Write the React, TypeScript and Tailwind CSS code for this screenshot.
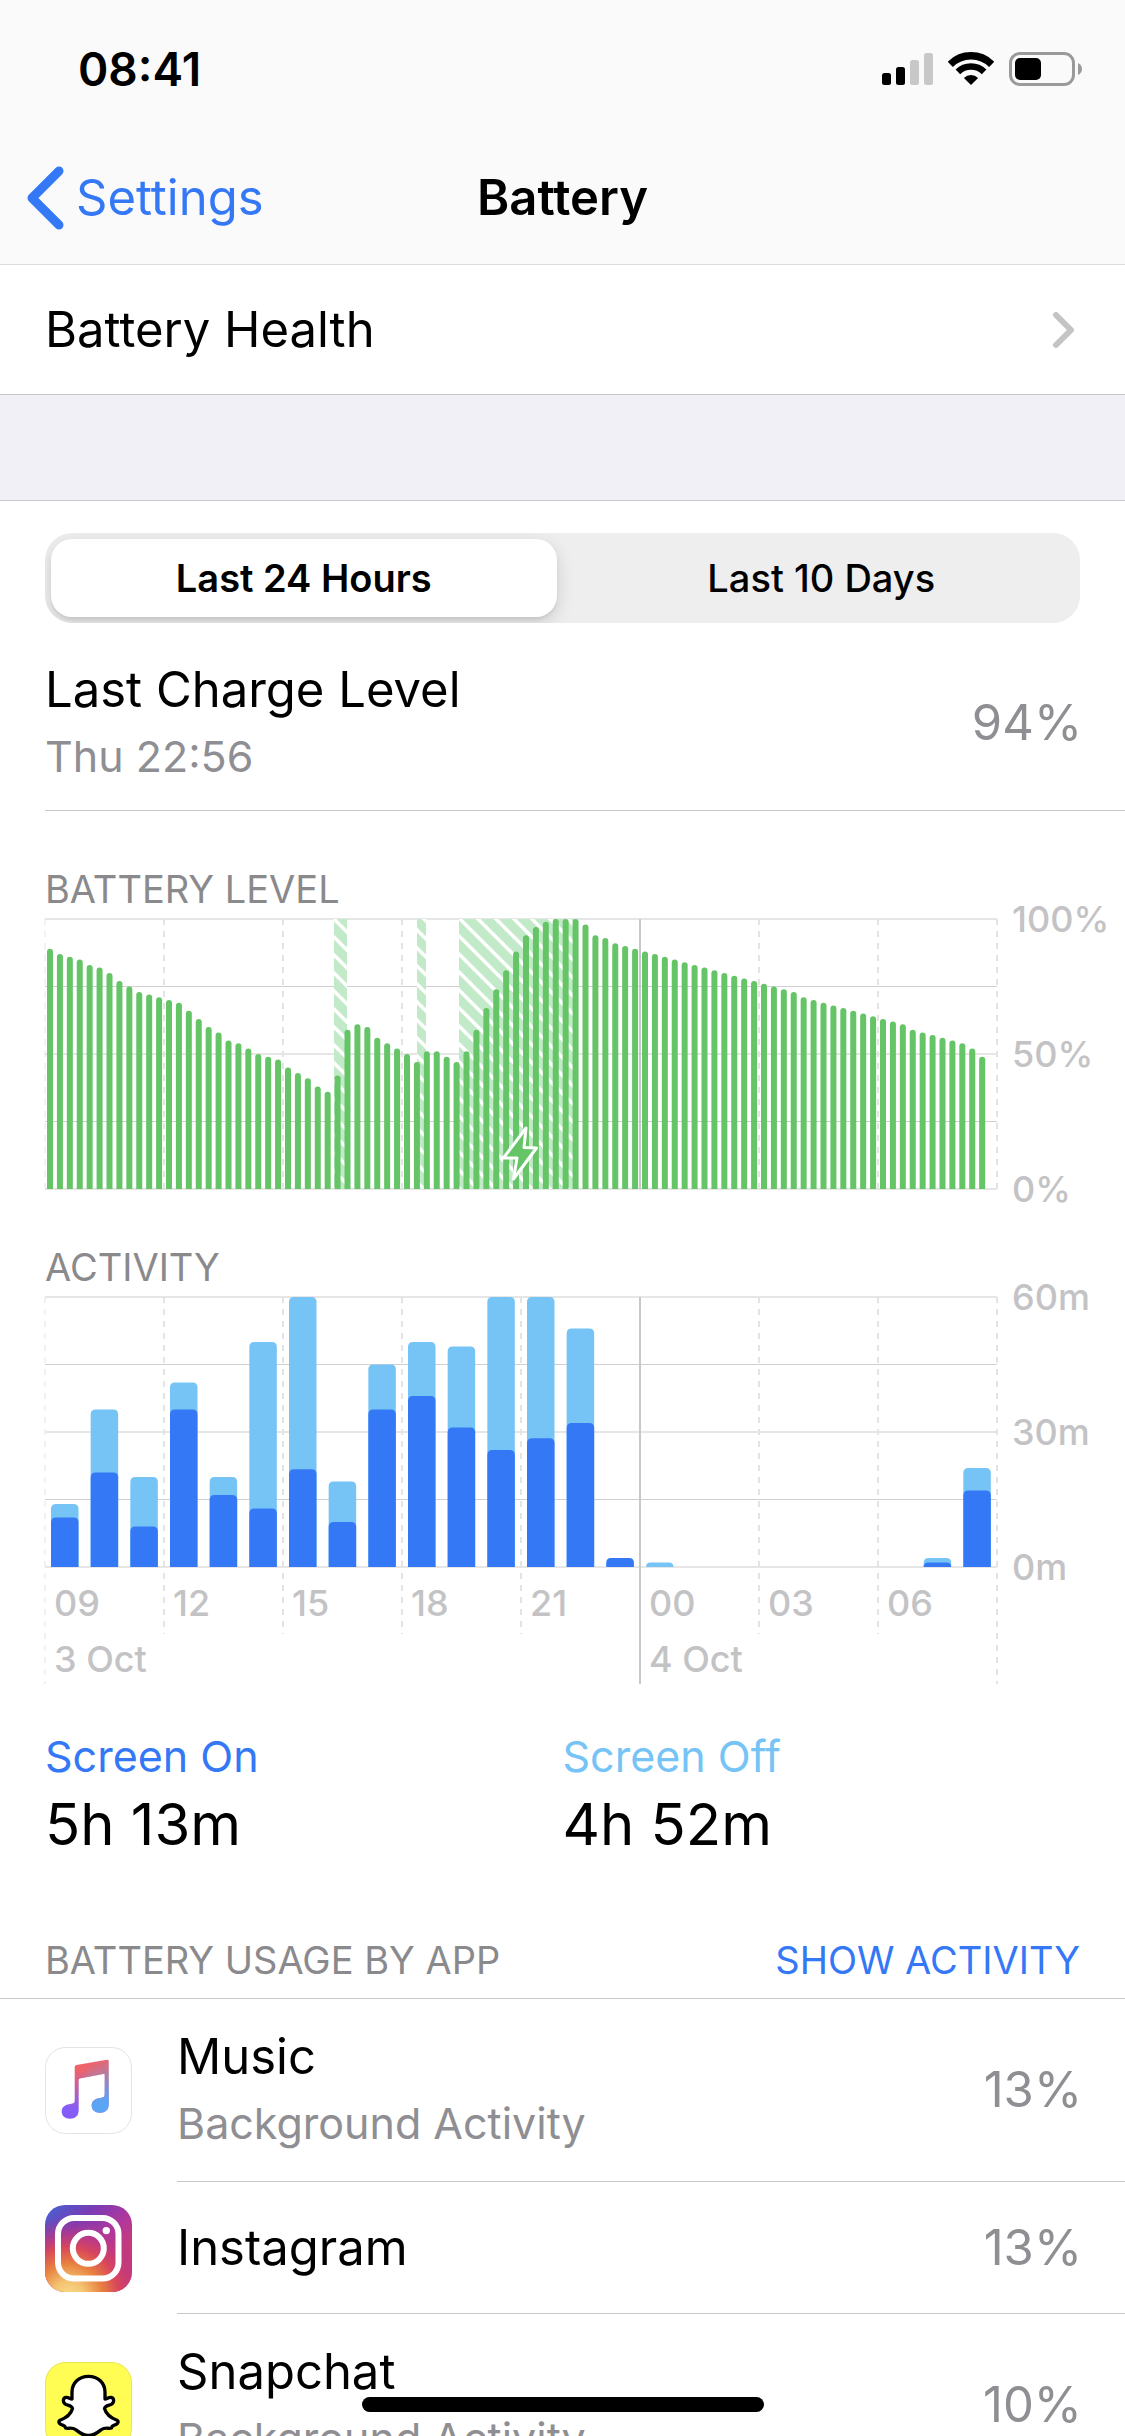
import { useState } from "react";

const BATTERY_LEVELS = [
  89, 87, 86, 85, 83, 82, 80, 77, 75, 73, 72, 71, 70, 69, 66, 63, 60, 58, 55, 54,
  52, 50, 49, 48, 45, 43, 41, 38, 36, 42, 59, 61, 60, 56, 54, 52, 50, 47, 51, 51,
  49, 47, 51, 59, 67, 74, 81, 88, 94, 97, 99, 100, 100, 100, 98, 94, 93, 91, 90,
  89, 88, 87, 86, 85, 84, 83, 82, 81, 80, 79, 78, 77, 76, 75, 74, 73, 71, 70, 69,
  68, 67, 66, 65, 64, 63, 62, 61, 59, 58, 57, 56, 55, 54, 52, 49,
];

// [minutes with the screen on, total minutes] for each hour
const ACTIVITY: [number, number][] = [
  [11, 14], [21, 35], [9, 20], [35, 41], [16, 20], [13, 50], [21.7, 60], [10, 19],
  [35, 45], [38, 50], [31, 49], [26, 60], [28.6, 60], [32, 53], [2, 2], [0, 1],
  [0, 0], [0, 0], [0, 0], [0, 0], [0, 0], [0, 0], [1, 2], [17, 22],
];

const CHARGING = [
  { x: 289, width: 13 },
  { x: 372, width: 9 },
  { x: 414, width: 114 },
];

const HOURS = ["09", "12", "15", "18", "21", "00", "03", "06"];

const PLOT_W = 952;
const PLOT_H = 270;
const COLUMN = PLOT_W / 8;

function topRounded(x: number, width: number, height: number, radius: number) {
  const r = Math.min(radius, height);
  const y = PLOT_H - height;
  return `M${x} ${PLOT_H}V${y + r}Q${x} ${y} ${x + r} ${y}H${x + width - r}Q${x + width} ${y} ${x + width} ${y + r}V${PLOT_H}Z`;
}

function Grid({ labels, tail, dayTail }: { labels: string[]; tail: number; dayTail: number }) {
  return (
    <g>
      {[0, 1, 2, 3, 4].map((i) => (
        <line
          key={i}
          x1={0}
          x2={PLOT_W}
          y1={i * 67.5}
          y2={i * 67.5}
          stroke={i % 2 ? "#d0d0d2" : "#e6e6e7"}
          strokeWidth={i % 2 ? 1 : 2}
        />
      ))}
      {[0, 1, 2, 3, 4, 5, 6, 7, 8].map((i) => (
        <line
          key={i}
          x1={i * COLUMN}
          x2={i * COLUMN}
          y1={0}
          y2={PLOT_H + (i === 0 || i === 8 ? dayTail : tail)}
          stroke="#e4e4e5"
          strokeWidth={i === 0 ? 1 : 2}
          strokeDasharray="6 6"
        />
      ))}
      <line x1={5 * COLUMN} x2={5 * COLUMN} y1={0} y2={PLOT_H + dayTail} stroke="#c8c8ca" strokeWidth={2} />
      {labels.map((label, i) => (
        <text key={label} x={967} y={i * 135 + 13} className="fill-[#c3c3c5] text-[36px] font-medium">
          {label}
        </text>
      ))}
    </g>
  );
}

function BatteryLevelChart() {
  return (
    <svg viewBox="0 0 1080 270" className="block w-full overflow-visible" role="img" aria-label="Battery level over the last 24 hours">
      <defs>
        <pattern id="charging" width="18" height="18" patternUnits="userSpaceOnUse">
          <rect width="18" height="18" fill="#c2eac8" />
          <path d="M-9-10 27 26M-9 8 9 26M9-10 27 8" stroke="#fff" strokeWidth="3.6" />
        </pattern>
      </defs>
      <Grid labels={["100%", "50%", "0%"]} tail={0} dayTail={0} />
      {CHARGING.map((c) => (
        <rect key={c.x} x={c.x} y={0} width={c.width} height={PLOT_H} fill="url(#charging)" />
      ))}
      {BATTERY_LEVELS.map((level, i) => (
        <path key={i} d={topRounded((i * COLUMN) / 12 + 2, 6, level * 2.7, 3)} fill="#65c466" />
      ))}
      <path
        d="M481 209 479 228.5 491.5 229 468.5 260 472 239 458.5 239Z"
        fill="#65c466"
        stroke="#fff"
        strokeWidth="3"
        strokeLinejoin="round"
      />
    </svg>
  );
}

function ActivityChart() {
  return (
    <svg viewBox="0 0 1080 388" className="block w-full overflow-visible" role="img" aria-label="Activity over the last 24 hours">
      <Grid labels={["60m", "30m", "0m"]} tail={67} dayTail={117} />
      {ACTIVITY.map(([on, total], i) => {
        const x = (i * COLUMN) / 3 + 6;
        return (
          <g key={i}>
            {total > 0 && <path d={topRounded(x, 27.5, total * 4.5, 5)} fill="#76c4f6" />}
            {on > 0 && <path d={topRounded(x, 27.5, on * 4.5, 5)} fill="#3478f6" />}
          </g>
        );
      })}
      {HOURS.map((hour, i) => (
        <text key={hour} x={i * COLUMN + 9} y={319} className="fill-[#c3c3c5] text-[36px] font-medium">
          {hour}
        </text>
      ))}
      <text x={9} y={375} className="fill-[#c3c3c5] text-[36px] font-medium">3 Oct</text>
      <text x={5 * COLUMN + 9} y={375} className="fill-[#c3c3c5] text-[36px] font-medium">4 Oct</text>
    </svg>
  );
}

function StatusIcons() {
  return (
    <div className="flex items-center gap-[15px]">
      <svg width="51" height="34" viewBox="0 0 51 34" aria-label="Signal">
        <rect x="0" y="21" width="9" height="12" rx="2.5" />
        <rect x="14" y="15" width="9" height="18" rx="2.5" />
        <rect x="28" y="8" width="9" height="25" rx="2.5" fill="#c8c8c8" />
        <rect x="42" y="1" width="9" height="32" rx="2.5" fill="#c8c8c8" />
      </svg>
      <svg width="46" height="34" viewBox="0 0 46 34" fill="none" stroke="#000" aria-label="Wi-Fi">
        <path d="M2.3 12.3A29.3 29.3 0 0 1 43.7 12.3" strokeWidth="7.3" />
        <path d="M9.9 19.9A18.5 18.5 0 0 1 36.1 19.9" strokeWidth="6.5" />
        <path d="M23 33 15.9 25.9A10 10 0 0 1 30.1 25.9Z" fill="#000" stroke="none" />
      </svg>
      <svg width="74" height="34" viewBox="0 0 74 34" aria-label="Battery">
        <rect x="1.5" y="1.5" width="63" height="31" rx="9.5" fill="none" stroke="#9a9a9a" strokeWidth="3" />
        <rect x="6" y="6" width="26" height="22" rx="5" />
        <path d="M69 11Q73 13 73 17T69 23Z" fill="#9a9a9a" />
      </svg>
    </div>
  );
}

function MusicIcon() {
  const note =
    "M31.5 18 62 12.7Q63.7 12.5 63.7 14V57C63.7 63 60 65.7 55 65.7 50 65.7 46.7 63 46.7 58.5 46.7 54 50 52 54 51.3L57.5 50.6Q59.7 50.2 59.7 48V28Q59.7 26.6 58.4 26.9L35 31.6Q33.7 31.9 33.7 33V63C33.7 69 30 71.7 25 71.7 20 71.7 16.7 69 16.7 64.5 16.7 60 20 58 24 57.3L27.5 56.6Q29.7 56.2 29.7 54V20Q29.7 18.4 31.5 18Z";
  return (
    <svg width="87" height="87" viewBox="0 0 87 87" className="shrink-0" aria-hidden="true">
      <defs>
        <linearGradient id="noteBase" gradientUnits="userSpaceOnUse" x1="34" y1="18" x2="26" y2="70">
          <stop offset="0.1" stopColor="#f0626a" />
          <stop offset="0.6" stopColor="#a75fc8" />
          <stop offset="0.85" stopColor="#865cf8" />
        </linearGradient>
        <linearGradient id="noteBlue" gradientUnits="userSpaceOnUse" x1="40" y1="18" x2="56" y2="56">
          <stop offset="0" stopColor="#5aa6f0" stopOpacity="0" />
          <stop offset="1" stopColor="#5aa6f4" />
        </linearGradient>
        <linearGradient id="noteSide" gradientUnits="userSpaceOnUse" x1="34" y1="0" x2="46" y2="0">
          <stop offset="0" stopColor="#000" />
          <stop offset="1" stopColor="#fff" />
        </linearGradient>
        <mask id="noteMask">
          <rect width="87" height="87" fill="url(#noteSide)" />
        </mask>
      </defs>
      <rect x="0.5" y="0.5" width="86" height="86" rx="20" fill="#fff" stroke="#e3e3e3" />
      <path d={note} fill="url(#noteBase)" />
      <path d={note} fill="url(#noteBlue)" mask="url(#noteMask)" />
    </svg>
  );
}

function InstagramIcon() {
  return (
    <svg width="87" height="87" viewBox="0 0 87 87" className="shrink-0" aria-hidden="true">
      <defs>
        <linearGradient id="igBase" gradientUnits="userSpaceOnUse" x1="8" y1="0" x2="60" y2="62">
          <stop offset="0" stopColor="#4a5fd0" />
          <stop offset="0.35" stopColor="#7a3bb4" />
          <stop offset="0.7" stopColor="#b0379c" />
          <stop offset="1" stopColor="#c83b78" />
        </linearGradient>
        <radialGradient id="igWarm" gradientUnits="userSpaceOnUse" cx="24" cy="92" r="80">
          <stop offset="0" stopColor="#f9dc8a" />
          <stop offset="0.2" stopColor="#f4c472" />
          <stop offset="0.42" stopColor="#e8803f" />
          <stop offset="0.62" stopColor="#d9475a" />
          <stop offset="0.8" stopColor="#c3397c" stopOpacity="0.6" />
          <stop offset="1" stopColor="#a0379c" stopOpacity="0" />
        </radialGradient>
      </defs>
      <rect width="87" height="87" rx="20" fill="url(#igBase)" />
      <rect width="87" height="87" rx="20" fill="url(#igWarm)" />
      <g fill="none" stroke="#fff" strokeWidth="6">
        <rect x="13" y="13" width="60.5" height="60.5" rx="16" />
        <circle cx="43.3" cy="43.3" r="15.5" />
      </g>
      <circle cx="61.3" cy="25.6" r="3.7" fill="#fff" />
    </svg>
  );
}

function SnapchatIcon() {
  return (
    <svg width="87" height="87" viewBox="0 0 87 87" className="shrink-0" aria-hidden="true">
      <rect x="0.5" y="0.5" width="86" height="86" rx="20" fill="#fffc54" stroke="#e8e552" />
      <path
        d="M43.5 14.3C53 14.3 60 21 60 30V37C62 37 63.5 35 66 35.3 69.5 36 69.5 41 66 42.5 63 43.5 60 43.5 59.5 46.5 61 52 66 56 72 58.3 74 59.3 73 61.5 71 62.5 69 63.5 67 63 66.5 66 64 67 60 65 56.5 67.5 52 71 49 73.5 43.5 73.5 38 73.5 35 71 30.5 67.5 27 65 23 67 20.5 66 20 63 18 63.5 16 62.5 14 61.5 13 59.3 15 58.3 21 56 26 52 27.5 46.5 27 43.5 24 43.5 21 42.5 17.5 41 17.5 36 21 35.3 23.5 35 25 37 27 37V30C27 21 34 14.3 43.5 14.3Z"
        fill="#fff"
        stroke="#000"
        strokeWidth="3.3"
        strokeLinejoin="round"
      />
    </svg>
  );
}

const APPS = [
  { name: "Music", note: "Background Activity", share: "13%", Icon: MusicIcon },
  { name: "Instagram", note: "", share: "13%", Icon: InstagramIcon },
  { name: "Snapchat", note: "Background Activity", share: "10%", Icon: SnapchatIcon },
];

export default function App() {
  const [range, setRange] = useState("Last 24 Hours");

  return (
    <div className="relative flex h-screen flex-col overflow-hidden bg-white font-['Inter','Liberation_Sans',sans-serif] text-black">
      <header className="shrink-0 border-b border-[#dcdcdd] bg-[#fafafb] pb-1.5">
        <div className="flex h-[138px] items-center justify-between pr-[42px] pl-[78px]">
          <span className="text-[46px] font-semibold">08:41</span>
          <StatusIcons />
        </div>
        <nav className="grid h-[120px] grid-cols-3 items-center">
          <a href="#settings" className="flex items-center gap-3 pl-[26px] text-[49px] text-[#3478f6]">
            <svg width="38" height="64" viewBox="0 0 38 64" fill="none" stroke="currentColor" strokeWidth="9" strokeLinecap="round" strokeLinejoin="round" aria-hidden="true">
              <path d="M33 5 6 32 33 59" />
            </svg>
            Settings
          </a>
          <h1 className="text-center text-[49px] font-semibold">Battery</h1>
        </nav>
      </header>

      <main className="min-h-0 flex-1 overflow-y-auto [scrollbar-width:none]">
        <a href="#health" className="flex h-[130px] items-center justify-between border-b border-[#c8c7cc] pr-[50px] pl-[45px] text-[49px]">
          Battery Health
          <svg width="24" height="38" viewBox="0 0 24 38" fill="none" stroke="#c4c4c6" strokeWidth="6" strokeLinecap="round" strokeLinejoin="round" aria-hidden="true">
            <path d="M5 4 20 19 5 34" />
          </svg>
        </a>
        <div className="h-[106px] border-b border-[#c8c7cc] bg-[#f1f0f6]" />

        <div className="px-[45px] pt-8">
          <div className="grid grid-cols-2 gap-3 overflow-hidden rounded-[27px] bg-[#eeeeef] p-1.5" role="group" aria-label="Range">
            {["Last 24 Hours", "Last 10 Days"].map((name) => (
              <button
                key={name}
                type="button"
                aria-pressed={range === name}
                onClick={() => setRange(name)}
                className={
                  range === name
                    ? "h-[78px] rounded-[21px] bg-white text-[38px] font-semibold shadow-[0_6px_18px_rgba(0,0,0,0.14),0_3px_3px_rgba(0,0,0,0.06)]"
                    : "h-[78px] rounded-[21px] text-[38px] font-medium"
                }
              >
                {name}
              </button>
            ))}
          </div>
        </div>

        <section className="ml-[45px] flex items-center justify-between border-b border-[#c8c7cc] pt-[34px] pr-[43px] pb-[21px]">
          <div>
            <h2 className="text-[49px] leading-[66px]">Last Charge Level</h2>
            <p className="text-[43px] leading-[66px] text-[#8e8e93]">Thu 22:56</p>
          </div>
          <span className="text-[49px] text-[#8e8e93]">94%</span>
        </section>

        <section className="pt-14 pl-[45px]">
          <h3 className="mb-2 text-[38px] leading-[44px] text-[#8a8a8d]">BATTERY LEVEL</h3>
          <BatteryLevelChart />
        </section>
        <section className="pt-14 pl-[45px]">
          <h3 className="mb-2 text-[38px] leading-[44px] text-[#8a8a8d]">ACTIVITY</h3>
          <ActivityChart />
        </section>

        <dl className="grid grid-cols-2 px-[45px] pt-10">
          <div>
            <dt className="text-[43px] leading-[62px] text-[#3478f6]">Screen On</dt>
            <dd className="text-[58px] leading-[74px]">5h 13m</dd>
          </div>
          <div>
            <dt className="text-[43px] leading-[62px] text-[#76c4f6]">Screen Off</dt>
            <dd className="text-[58px] leading-[74px]">4h 52m</dd>
          </div>
        </dl>

        <div className="flex justify-between border-b border-[#c8c7cc] px-[45px] pt-[77px] pb-4 text-[38px] leading-[44px]">
          <h3 className="text-[#8a8a8d]">BATTERY USAGE BY APP</h3>
          <button type="button" className="text-[#3478f6]">SHOW ACTIVITY</button>
        </div>
        <ul>
          {APPS.map(({ name, note, share, Icon }) => (
            <li key={name} className="flex items-center gap-[45px] pl-[45px]">
              <Icon />
              <div className="flex min-h-[132px] flex-1 items-center justify-between border-b border-[#c8c7cc] pr-[43px]">
                {note ? (
                  <div className="py-[25px] leading-[66px]">
                    <p className="text-[49px]">{name}</p>
                    <p className="text-[43px] text-[#8e8e93]">{note}</p>
                  </div>
                ) : (
                  <p className="text-[49px]">{name}</p>
                )}
                <span className="text-[49px] text-[#8e8e93]">{share}</span>
              </div>
            </li>
          ))}
        </ul>
      </main>

      <div className="absolute bottom-6 left-1/2 h-[15px] w-[402px] -translate-x-1/2 rounded-full bg-black" />
    </div>
  );
}
